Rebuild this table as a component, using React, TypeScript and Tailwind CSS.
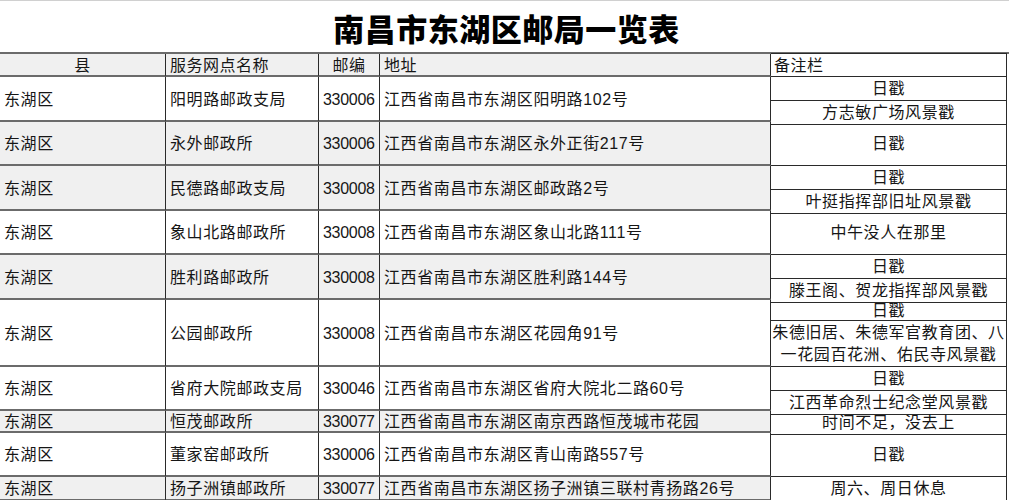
import React from "react";

type Row = {
  county: string;
  name: string;
  zip: string;
  addr: string;
  notes: string[][];
  h: string;
  gray: boolean;
};

const rows: Row[] = [
  { county: "东湖区", name: "阳明路邮政支局", zip: "330006", addr: "江西省南昌市东湖区阳明路102号", notes: [["日戳"], ["方志敏广场风景戳"]], h: "h-[45px]", gray: false },
  { county: "东湖区", name: "永外邮政所", zip: "330006", addr: "江西省南昌市东湖区永外正街217号", notes: [["日戳"]], h: "h-[44px]", gray: true },
  { county: "东湖区", name: "民德路邮政支局", zip: "330008", addr: "江西省南昌市东湖区邮政路2号", notes: [["日戳"], ["叶挺指挥部旧址风景戳"]], h: "h-[45px]", gray: true },
  { county: "东湖区", name: "象山北路邮政所", zip: "330008", addr: "江西省南昌市东湖区象山北路111号", notes: [["中午没人在那里"]], h: "h-[44px]", gray: false },
  { county: "东湖区", name: "胜利路邮政所", zip: "330008", addr: "江西省南昌市东湖区胜利路144号", notes: [["日戳"], ["滕王阁、贺龙指挥部风景戳"]], h: "h-[45px]", gray: true },
  { county: "东湖区", name: "公园邮政所", zip: "330008", addr: "江西省南昌市东湖区花园角91号", notes: [["日戳"], ["朱德旧居、朱德军官教育团、八", "一花园百花洲、佑民寺风景戳"]], h: "h-[67px]", gray: false },
  { county: "东湖区", name: "省府大院邮政支局", zip: "330046", addr: "江西省南昌市东湖区省府大院北二路60号", notes: [["日戳"], ["江西革命烈士纪念堂风景戳"]], h: "h-[44px]", gray: false },
  { county: "东湖区", name: "恒茂邮政所", zip: "330077", addr: "江西省南昌市东湖区南京西路恒茂城市花园", notes: [["时间不足，没去上"]], h: "h-[22px]", gray: true },
  { county: "东湖区", name: "董家窑邮政所", zip: "330006", addr: "江西省南昌市东湖区青山南路557号", notes: [["日戳"]], h: "h-[44px]", gray: false },
  { county: "东湖区", name: "扬子洲镇邮政所", zip: "330077", addr: "江西省南昌市东湖区扬子洲镇三联村青扬路26号", notes: [["周六、周日休息"]], h: "h-[24px]", gray: true },
];

const cell = "flex items-center border-r border-b-2 border-r-[#2a2a2a] border-b-[#6b6b6b] px-[4px] pt-[2px] shrink-0";

export default function App() {
  return (
    <div
      className="w-[1009px] h-[500px] overflow-hidden bg-white text-[#161616] text-[16px] leading-[20px]"
      style={{ fontFamily: '"Liberation Sans", "Noto Sans CJK SC", sans-serif' }}
    >
      <div className="h-[54px] flex items-center justify-center border-t border-[#d0d0d0] border-b-2 border-b-[#6b6b6b] pl-[4px] pt-[2px]">
        <h1 className="text-[31px] font-black tracking-[0.5px] text-black leading-none" style={{ fontFamily: '"Noto Sans CJK SC", sans-serif' }}>
          南昌市东湖区邮局一览表
        </h1>
      </div>

      <div className="flex h-[23px] tracking-[0.5px]">
        <div className={`${cell} w-[166px] justify-center bg-[#f0f0f0] border-b-[#2a2a2a] border-b`}>县</div>
        <div className={`${cell} w-[153px] bg-[#f0f0f0] border-b-[#2a2a2a] border-b`}>服务网点名称</div>
        <div className={`${cell} w-[61px] justify-center bg-[#f0f0f0] border-b-[#2a2a2a] border-b`}>邮编</div>
        <div className={`${cell} w-[391px] bg-[#f0f0f0] border-b-[#2a2a2a] border-b`}>地址</div>
        <div className="flex items-center w-[236px] px-[3px] pt-[2px] border-y border-r border-[#2a2a2a] -mt-px h-[24px]">备注栏</div>
      </div>

      {rows.map((r, i) => (
        <div key={i} className={`flex ${r.h} tracking-[0.6px]`}>
          <div className={`${cell} w-[166px] ${r.gray ? "bg-[#f0f0f0]" : "bg-white"}`}>{r.county}</div>
          <div className={`${cell} w-[153px] ${r.gray ? "bg-[#f0f0f0]" : "bg-white"}`}>{r.name}</div>
          <div className={`${cell} w-[61px] px-[3px] tracking-[-0.3px] ${r.gray ? "bg-[#f0f0f0]" : "bg-white"}`}>{r.zip}</div>
          <div className={`${cell} w-[391px] px-[3px] ${r.gray ? "bg-[#f0f0f0]" : "bg-white"}`}>{r.addr}</div>
          <div className="w-[236px] flex flex-col border-r border-[#2a2a2a] shrink-0">
            {r.notes.map((n, j) => (
              <div
                key={j}
                className={`flex flex-col items-center justify-center text-center border-b border-[#2a2a2a] pt-[1px] ${
                  r.notes.length > 1 && j === 0 && r.notes[1].length > 1 ? "h-[21px] flex-none" : "flex-1"
                }`}
              >
                {n.map((line, k) => (
                  <span key={k} className="leading-[22px]">{line}</span>
                ))}
              </div>
            ))}
          </div>
        </div>
      ))}
    </div>
  );
}
